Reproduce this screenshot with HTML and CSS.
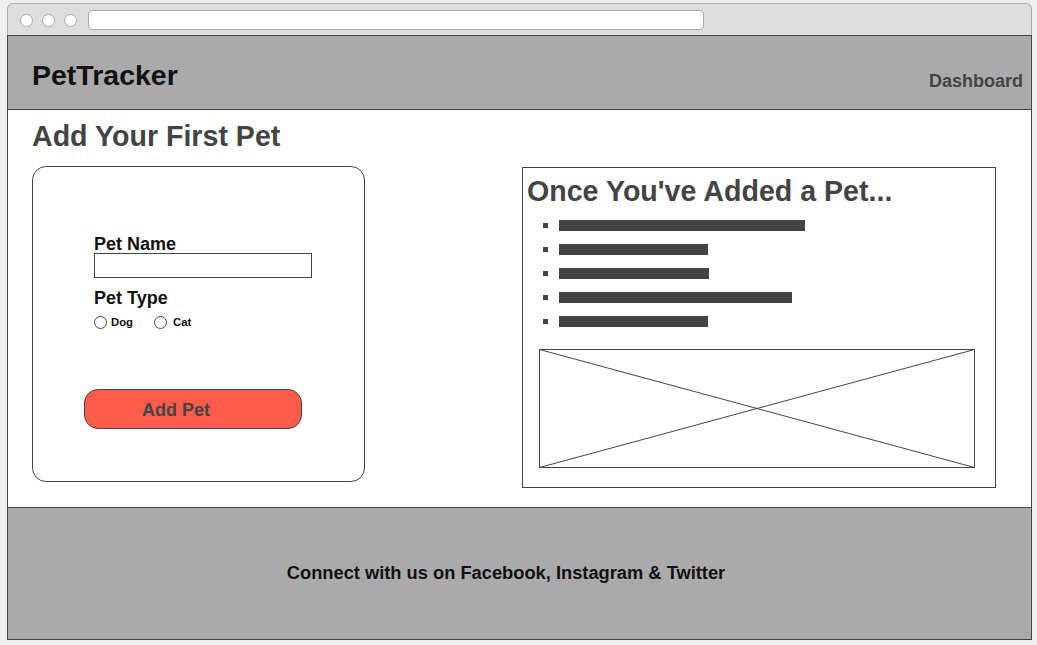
FILE: index.html
```html
<!DOCTYPE html>
<html lang="en">
<head>
<meta charset="utf-8">
<title>PetTracker</title>
<link rel="stylesheet" href="styles.css">
</head>
<body>
<div class="window">
  <div class="chrome">
    <span class="dot"></span>
    <span class="dot"></span>
    <span class="dot"></span>
    <div class="url"></div>
  </div>
  <header class="topbar">
    <div class="brand">PetTracker</div>
    <nav class="nav">Dashboard</nav>
  </header>
  <main class="main">
    <h1 class="page-title">Add Your First Pet</h1>
    <div class="columns">
      <form class="card">
        <label class="field-label">Pet Name</label>
        <div class="text-input"></div>
        <label class="field-label type-label">Pet Type</label>
        <div class="radios">
          <span class="option"><span class="radio"></span><span class="opt-text">Dog</span></span>
          <span class="option"><span class="radio"></span><span class="opt-text cat">Cat</span></span>
        </div>
        <button type="button" class="add-btn">Add Pet</button>
      </form>
      <section class="preview">
        <h2 class="preview-title">Once You've Added a Pet...</h2>
        <ul class="bars">
          <li class="bar-item"><span class="bullet"></span><span class="bar" style="width:246px"></span></li>
          <li class="bar-item"><span class="bullet"></span><span class="bar" style="width:149px"></span></li>
          <li class="bar-item"><span class="bullet"></span><span class="bar" style="width:150px"></span></li>
          <li class="bar-item"><span class="bullet"></span><span class="bar" style="width:233px"></span></li>
          <li class="bar-item"><span class="bullet"></span><span class="bar" style="width:149px"></span></li>
        </ul>
        <svg class="placeholder" viewBox="0 0 437 119" preserveAspectRatio="none">
          <rect x="0.5" y="0.5" width="436" height="118" fill="#fff" stroke="#444" stroke-width="1"/>
          <line x1="0.5" y1="0.5" x2="436.5" y2="118.5" stroke="#444" stroke-width="1"/>
          <line x1="0.5" y1="118.5" x2="436.5" y2="0.5" stroke="#444" stroke-width="1"/>
        </svg>
      </section>
    </div>
  </main>
  <footer class="footer">Connect with us on Facebook, Instagram &amp; Twitter</footer>
</div>
</body>
</html>
```
FILE: styles.css
```css
html, body {
  margin: 0;
  padding: 0;
}
body {
  background: #efefef;
  font-family: "Liberation Sans", Arial, sans-serif;
  font-weight: bold;
}
.window {
  margin: 3px 0 0 7px;
  width: 1025px;
  height: 637px;
  display: flex;
  flex-direction: column;
  box-sizing: border-box;
}
.chrome {
  height: 32px;
  box-sizing: border-box;
  background: #dddddd;
  border: 1px solid #a9a9a9;
  border-bottom: none;
  border-radius: 6px 6px 0 0;
  display: flex;
  align-items: center;
  padding-left: 12px;
  gap: 9px;
}
.dot {
  width: 13px;
  height: 13px;
  box-sizing: border-box;
  border-radius: 50%;
  background: #fff;
  border: 1px solid #a9a9a9;
  margin-top: 1px;
}
.url {
  margin-left: 2px;
  width: 616px;
  height: 20px;
  box-sizing: border-box;
  background: #fff;
  border: 1px solid #a9a9a9;
  border-radius: 4px;
  margin-top: 1px;
}
.topbar {
  height: 75px;
  box-sizing: border-box;
  border: 1px solid #444;
  background: #aaaaaa;
  display: flex;
  justify-content: space-between;
  align-items: flex-start;
  padding: 0 8px 0 24px;
}
.brand {
  font-size: 28.5px;
  line-height: 28px;
  color: #111;
  padding-top: 25px;
}
.nav {
  font-size: 18px;
  line-height: 18px;
  color: #444;
  padding-top: 36px;
}
.main {
  flex: 1;
  background: #fff;
  border-left: 1px solid #444;
  border-right: 1px solid #444;
  padding: 12px 0 0 24px;
}
.page-title {
  margin: 0;
  font-size: 28.6px;
  line-height: 28px;
  color: #444;
}
.columns {
  margin-top: 16px;
  display: flex;
  align-items: flex-start;
  gap: 157px;
}
.card {
  margin: 0;
  width: 333px;
  height: 316px;
  box-sizing: border-box;
  border: 1px solid #444;
  border-radius: 14px;
  padding: 68px 0 0 61px;
}
.field-label {
  display: block;
  font-size: 18px;
  line-height: 18px;
  color: #111;
}
.type-label {
  margin-top: 11px;
}
.text-input {
  width: 218px;
  height: 25px;
  box-sizing: border-box;
  border: 1px solid #444;
  background: #fff;
}
.radios {
  margin-top: 9px;
  height: 13px;
  display: flex;
  align-items: center;
  gap: 21px;
}
.option {
  display: flex;
  align-items: center;
}
.radio {
  width: 13px;
  height: 13px;
  box-sizing: border-box;
  border: 1px solid #444;
  border-radius: 50%;
  background: #fff;
}
.opt-text {
  font-size: 11.3px;
  line-height: 13px;
  color: #111;
  margin-left: 4px;
}
.opt-text.cat {
  margin-left: 6px;
}
.add-btn {
  display: block;
  margin: 60px 0 0 -10px;
  width: 218px;
  height: 40px;
  box-sizing: border-box;
  border: 1px solid #444;
  border-radius: 14px;
  background: #fd5c4c;
  color: #444;
  font-family: "Liberation Sans", Arial, sans-serif;
  font-weight: bold;
  font-size: 18px;
  text-align: left;
  padding: 3px 0 0 57px;
}
.preview {
  margin-top: 1px;
  width: 474px;
  height: 321px;
  box-sizing: border-box;
  border: 1px solid #444;
  padding: 9px 0 0 4px;
}
.preview-title {
  margin: 0;
  font-size: 28.6px;
  line-height: 28px;
  color: #444;
}
.bars {
  margin: 8px 0 0 -4px;
  padding: 0;
  list-style: none;
}
.bar-item {
  height: 24px;
  display: flex;
  align-items: center;
  padding-left: 20px;
}
.bullet {
  width: 5px;
  height: 5px;
  background: #444;
}
.bar {
  margin-left: 11px;
  height: 11px;
  background: #444;
}
.placeholder {
  display: block;
  margin: 16px 0 0 12px;
  width: 436px;
  height: 119px;
}
.footer {
  height: 133px;
  box-sizing: border-box;
  border: 1px solid #444;
  background: #aaaaaa;
  display: flex;
  align-items: center;
  justify-content: center;
  padding: 0 27px 2px 0;
  font-size: 18.3px;
  color: #111;
}
```
